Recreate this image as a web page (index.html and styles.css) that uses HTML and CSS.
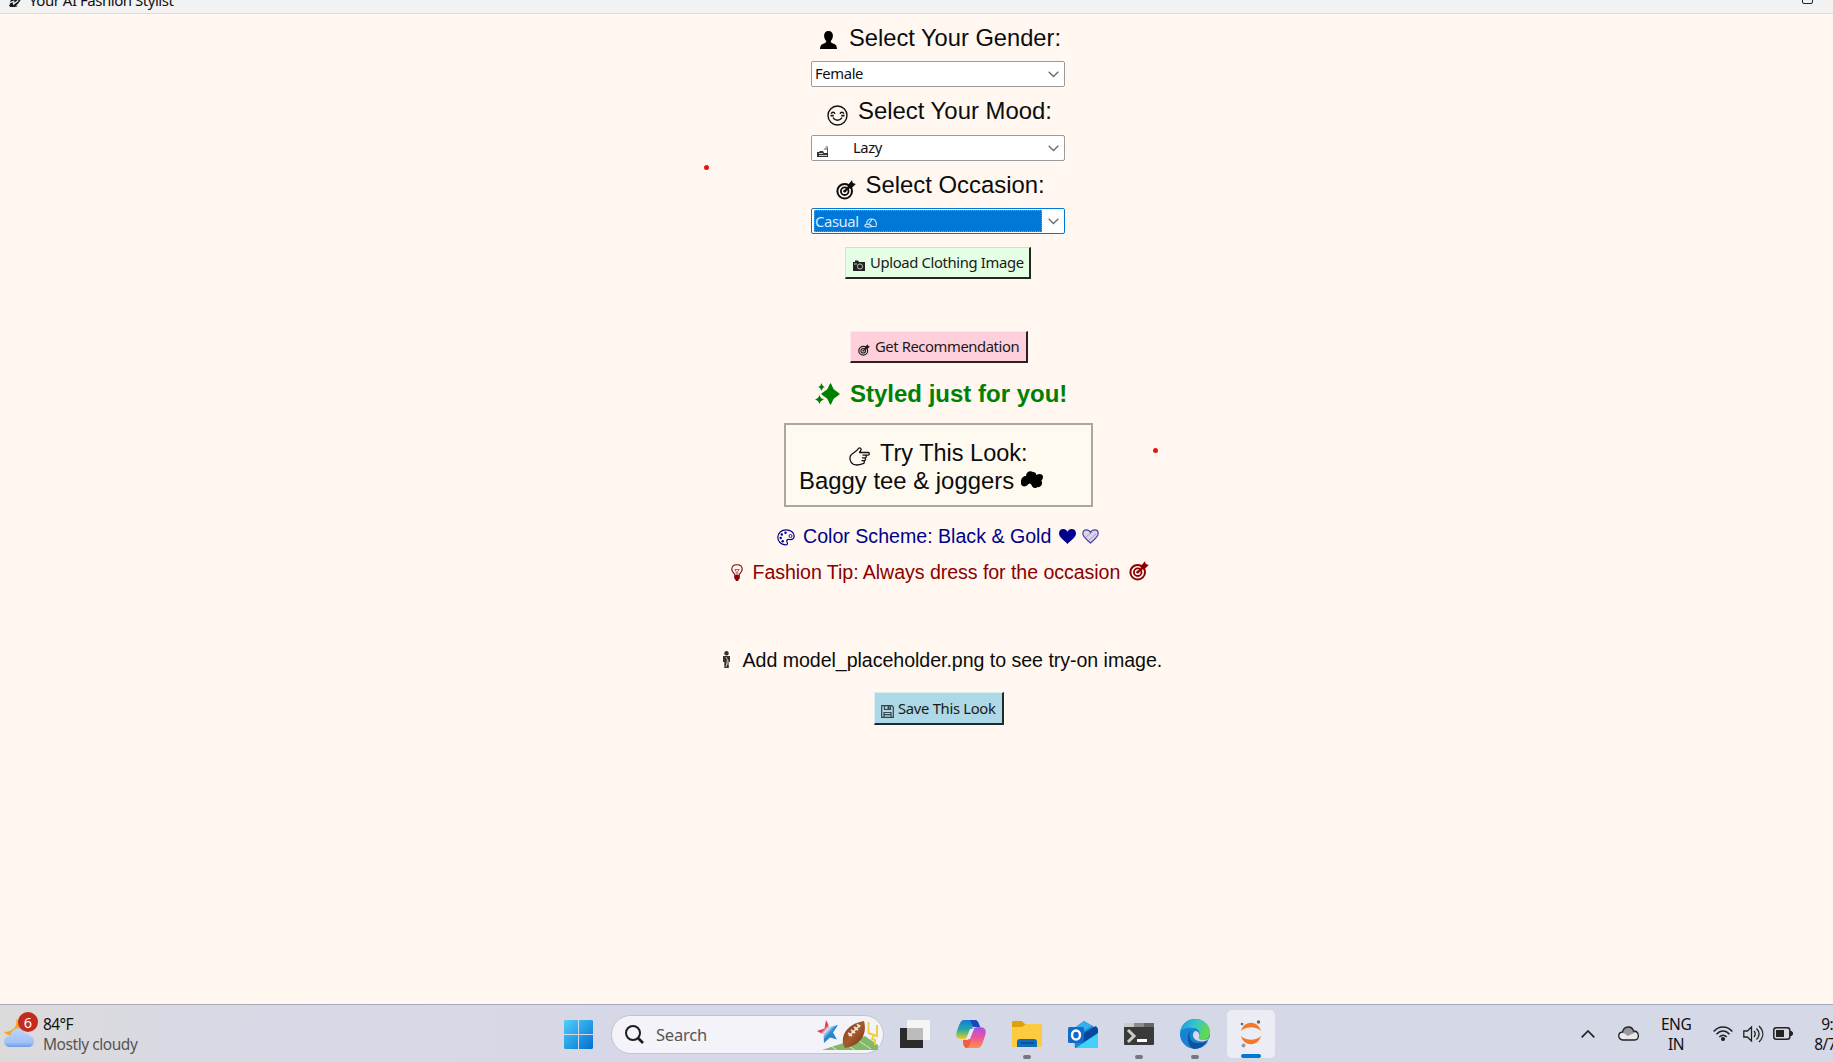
FILE: index.html
```html
<!DOCTYPE html>
<html lang="en">
<head>
<meta charset="utf-8">
<title>Your AI Fashion Stylist</title>
<link rel="stylesheet" href="styles.css">
</head>
<body>
<svg class="defs" aria-hidden="true">
  <symbol id="target" viewBox="0 0 20 20">
    <g fill="none" stroke="currentColor"><circle cx="8.7" cy="11.2" r="7.3" stroke-width="2"/><circle cx="8.7" cy="11.2" r="3.8" stroke-width="1.8"/><path d="M8.7 11.2 15 5.2" stroke-width="2"/></g>
    <circle cx="8.7" cy="11.2" r="1.4" fill="currentColor"/><path d="M11.500 5.500 16 .3l.8 2.800 3 1-4.700 4.500-3.200-.2z" fill="currentColor"/>
  </symbol>
</svg>
<div class="window">
  <header class="titlebar">
    <svg class="feather" viewBox="0 0 16 20"><path d="M2 15c0-3 2-5 5-6 3 0 5-2 9-5-1 6-3 9-6 12-1 1-2 2-3 3H2z" fill="#111"/><path d="M1 15l5-2v3l5-4M8 11l3-3" fill="none" stroke="#ddd" stroke-width="1.500"/><path d="M1 17c1 2 5 2 9 1" fill="none" stroke="#222"/></svg>
    <span>Your AI Fashion Stylist</span>
    <i class="maximize"></i>
  </header>
  <main class="stylist">
    <h2 class="line heading gender">
      <svg width="17" height="19" viewBox="0 0 17 19"><path d="M8.5 0c3 0 4.6 2 4.4 5-.2 2.600-1.300 4.200-2.200 5 .2 1.500 1 2 3 2.700 2.300.8 3.100 2 3.300 5.300H0c.2-3.300 1-4.500 3.300-5.300 2-.7 2.800-1.200 3-2.700-.9-.8-2-2.400-2.200-5C3.900 2 5.500 0 8.500 0z"/></svg>
      <span>Select Your Gender:</span>
    </h2>
    <div class="combo"><span>Female</span><svg class="chevron" viewBox="0 0 11 7"><path d="M.7.7l4.800 4.800L10.300.7"/></svg></div>
    <h2 class="line heading mood">
      <svg width="21" height="21" viewBox="0 0 21 21" fill="none" stroke="#111" stroke-width="1.400"><circle cx="10.500" cy="10.500" r="9.500"/><path d="M4.200 8.700c.8-2 3-2 3.800 0M13 8.700c.8-2 3-2 3.800 0M6 12.500c2 3.600 7 3.600 9 0"/><path d="M3.500 10.700h3.200M14.300 10.700h3.200" stroke-width="1.800"/></svg>
      <span>Select Your Mood:</span>
    </h2>
    <div class="combo"><svg class="sofa" viewBox="0 0 12 12"><path d="M0 7h2l1-1h3l1 2h4v4H0z" fill="#333"/><path d="M7 4h3M8.500 2h2.500M10.500 3v5" stroke="#556" fill="none"/><path d="M2 8.500h4M2 10.500h8" stroke="#ccc" fill="none"/></svg><span>Lazy</span><svg class="chevron" viewBox="0 0 11 7"><path d="M.7.7l4.800 4.800L10.300.7"/></svg></div>
    <h2 class="line heading occasion">
      <svg width="20" height="20"><use href="#target"/></svg>
      <span>Select Occasion:</span>
    </h2>
    <div class="combo focused"><div class="selection"><span>Casual</span><svg width="13" height="10" viewBox="0 0 13 10" fill="none" stroke="#cfe6fa" stroke-width="1.200"><path d="M2.500 5.500C3 2.500 5 1 7.500 1c3 0 5 2.500 5 6.500M.6 7.500C2 5.500 5.500 5.500 8 8.500H12.500M.6 7.500C1 9.500 5 9.500 8 8.500M5 5.500l3-4"/></svg></div><svg class="chevron" viewBox="0 0 11 7"><path d="M.7.7l4.800 4.800L10.300.7"/></svg></div>
    <button class="btn upload"><svg width="12" height="11" viewBox="0 0 12 11"><path d="M0 2h2V.5h3L6 2h6v9H0z" fill="#222"/><circle cx="7" cy="6.500" r="2.600" fill="#222" stroke="#b8c9b5"/><path d="M1 4h3" stroke="#b8c9b5"/></svg><span>Upload Clothing Image</span></button>
    <button class="btn recommend"><svg width="12" height="12"><use href="#target"/></svg><span>Get Recommendation</span></button>
    <h2 class="line styled">
      <svg width="25" height="22" viewBox="0 0 25 22" fill="currentColor"><path d="M15.500 0c1.500 2 2 4.500 3.500 6.500 1.500 1.500 4 2.500 6 4.500-2 2-4.500 3-6 4.500-1.500 2-2 4.500-3.500 6.500-1.500-2-2-4.500-3.500-6.500C10.500 14 8 13 6 11c2-2 4.500-3 6-4.500 1.500-2 2-4.500 3.500-6.500zM6.500 0c.8 2.500 1.500 3.200 3.500 4-2 .8-2.700 1.500-3.500 4C5.700 5.500 5 4.800 3 4c2-.8 2.700-1.500 3.500-4zM4.500 12c1 2.700 2 3.700 4.500 4.500-2.500.8-3.500 1.800-4.500 4.500-1-2.700-2-3.700-4.500-4.500C2.500 15.700 3.500 14.700 4.500 12z"/></svg>
      <span>Styled just for you!</span>
    </h2>
    <section class="look">
      <div class="line try">
        <svg width="21" height="19" viewBox="0 0 21 19" fill="none" stroke="#111" stroke-width="1.300"><path d="M10 5.500h9.200c1.500 0 1.500 2.600 0 2.600H13.500M14.500 8.200h1.800c1.300 0 1.300 2.700 0 2.700H13M15.500 11c1.300 0 1.300 2.700 0 2.700H12.500M14.500 13.800c1.300 0 1 2.700-.4 2.900C9 18.500 4 18.500 2 15 .5 12.500.5 9 2.500 7.500 5 5.500 8 4 9.500 1.500 10.300.3 12.500 1 12 2.800 11.700 4 11.200 4.800 10 5.500"/></svg>
        <span>Try This Look:</span>
      </div>
      <div class="line outfit">
        <span>Baggy tee &amp; joggers</span>
        <svg width="22" height="17" viewBox="0 0 22 17"><path d="M5 5C5 1 9-1 12 1c2 0 3 1 3.500 3 3-2 6.500-1 6.500 2 0 2-1.500 3-1.500 4 2 3-1 7-4 6-2 2-5 1-6-2-1-2-2-2-4 0-3 3-7.500 1-6.500-3C-.5 8 2 5 5 5z"/></svg>
      </div>
    </section>
    <p class="line scheme">
      <svg width="18" height="17" viewBox="0 0 18 17" fill="none" stroke="currentColor" stroke-width="1.200"><path d="M9 .8c5 0 8.200 3 8.200 6.200 0 3-2 4-5 3.500-2.500-.3-3 1-2 3 .7 1.500 0 2.600-2 2.400C4 15.500.8 12.500.8 8.500.8 4 4.500.8 9 .8z"/><g fill="currentColor" stroke="none"><circle cx="8.500" cy="3.700" r="1.200"/><circle cx="4.800" cy="5.500" r="1.200"/><circle cx="3.700" cy="9" r="1.200"/><circle cx="5.700" cy="12.300" r="1.200"/></g><circle cx="13.500" cy="7" r="1.500" stroke-width=".9"/></svg>
      <span>Color Scheme: Black &amp; Gold</span>
      <svg width="17" height="15" viewBox="0 0 17 15" fill="currentColor"><path d="M8.500 15C5 11 0 8.500 0 4.300 0 1.500 2 0 4.300 0c2 0 3.500 1.200 4.200 2.700C9.200 1.200 10.700 0 12.700 0 15 0 17 1.500 17 4.300 17 8.500 12 11 8.500 15z"/></svg>
      <svg class="light-heart" width="17" height="15" viewBox="0 0 17 15" fill="#dcd3e6" stroke="#4a42a8" stroke-width="1.200"><path d="M8.500 14C5 10.500.8 8.200.8 4.500.8 2 2.500.8 4.300.8c2 0 3.500 1.200 4.200 2.700C9.200 2 10.700.8 12.700.8c2 0 3.500 1.500 3.500 3.700C16.200 8.200 12 10.500 8.500 14z"/><path d="M4 8l6-5M7 11l7-6" stroke="#9d93c5" stroke-width=".8"/></svg>
    </p>
    <p class="line tip">
      <svg width="12" height="17" viewBox="0 0 12 17" fill="none" stroke="currentColor" stroke-width="1.100"><path d="M4 11.500C3.500 9 .8 8.500.8 5.300.8 2.500 3 .7 6 .7s5.200 1.800 5.200 4.600c0 3.200-2.700 3.700-3.200 6.200z"/><path d="M5.200 11V7.500L3.800 5.500h4.400L6.800 7.500V11" stroke-width=".6"/><path d="M3.800 12h4.400v2L6.500 16.500h-1L3.800 14z" fill="currentColor"/></svg>
      <span>Fashion Tip: Always dress for the occasion</span>
      <svg width="20" height="20"><use href="#target"/></svg>
    </p>
    <p class="line placeholder">
      <svg width="9" height="18" viewBox="0 0 9 18"><circle cx="4.500" cy="2.200" r="2.200" fill="#333"/><path d="M1 5h7v6H6.800v6H2.300v-6H1z" fill="#333"/><path d="M4 6l1.500 3L4 16M6 9v5" fill="none" stroke="#c9b9ae"/></svg>
      <span>Add model_placeholder.png to see try-on image.</span>
    </p>
    <button class="btn save"><svg width="13" height="13" viewBox="0 0 13 13" fill="none" stroke="#34454c" stroke-width="1.200"><path d="M.7.7h10.300l1.300 1.500v10.100H.7z"/><path d="M3.500 1v3.500h6V1M3 12V7.500h7V12M3 9.700h7"/><path d="M7.500 1v3" stroke-width="2"/></svg><span>Save This Look</span></button>
  </main>
  <i class="dot dot-left"></i><i class="dot dot-right"></i>
</div>
<footer class="taskbar">
  <div class="weather">
    <svg width="32" height="38" viewBox="0 0 32 38"><defs><linearGradient id="cl" x2="0" y2="1"><stop stop-color="#b9d5fb"/><stop offset=".75" stop-color="#a3c3f6"/><stop offset="1" stop-color="#6f9bea"/></linearGradient></defs><path d="M12 5c2 7-3 13-12 13 3 4 10 5 14 2 5-3 5-11-2-15z" fill="#f5a623"/><path d="M6 33c-8 0-8-11 0-11C8 13 18 11 21 20c2-1 4 0 4 2 7 0 7 11-1 11z" fill="url(#cl)"/></svg>
    <b class="badge">6</b>
    <div class="forecast"><span>84°F</span><span class="muted">Mostly cloudy</span></div>
  </div>
  <nav class="apps">
    <svg class="start" width="29" height="29" viewBox="0 0 29 29"><defs><linearGradient id="win" x2="1" y2="1"><stop stop-color="#4fd0fc"/><stop offset="1" stop-color="#0070cf"/></linearGradient></defs><path d="M1 0h13v14H0V1zM15 0h13l1 1v13H15zM0 15h14v14H1l-1-1zM15 15h14v13l-1 1H15z" fill="url(#win)"/></svg>
    <div class="search">
      <svg width="19" height="19" viewBox="0 0 19 19" fill="none" stroke="#1c1c1c" stroke-width="2"><circle cx="8" cy="8" r="7"/><path d="M13 13l5 5" stroke-width="2.600"/></svg>
      <span>Search</span>
      <svg class="football" width="62" height="32" viewBox="0 0 62 32"><defs><linearGradient id="star" x1="0" y1="0" x2="1" y2="1"><stop offset=".35" stop-color="#e8394b"/><stop offset=".45" stop-color="#d9e3ef"/><stop offset=".6" stop-color="#2586d2"/></linearGradient><linearGradient id="ball" x2="1" y2="1"><stop stop-color="#7b3c1d"/><stop offset=".5" stop-color="#a65a2d"/><stop offset="1" stop-color="#6d2f15"/></linearGradient></defs><path d="M5 31l43-14 13 9v5z" fill="#82b968"/><path d="M15 28l5 3M27 24l11 7M39 20l15 10" stroke="#d7e8cb"/><path d="M9 1l3.500 7L21 6l-5 7.500 4 7-7-2-6 5.500-.5-8.500L0 12l7.500-2.500z" fill="url(#star)"/><path d="M51.500 3v11l8.500 3V6M57 16l-2 4 3 1v5" fill="none" stroke="#efcf3f" stroke-width="2"/><path d="M28 29c-6-9 0-24 19-27 3 11-1 24-19 27z" fill="url(#ball)"/><path d="M32 17L43 6M31 14l4 3M34 11l4 3M37 8l4 3M40 5l3 3" stroke="#f3e8e0" stroke-width="1.600"/></svg>
    </div>
    <a class="app"><svg viewBox="0 0 32 32"><path d="M1 10h23v20H1z" fill="#2b2b2b"/><path d="M8 2h23v20H8z" fill="#f5f5f5"/><path d="M8 10h16v12H8z" fill="#bcbcbc"/></svg></a>
    <a class="app"><svg viewBox="0 0 32 32"><defs><linearGradient id="cp1" x2="0" y2="1"><stop stop-color="#1679dc"/><stop offset=".5" stop-color="#22aaa5"/><stop offset="1" stop-color="#f0cc22"/></linearGradient><linearGradient id="cp2" x2="0" y2="1"><stop stop-color="#a451ee"/><stop offset=".5" stop-color="#ee5399"/><stop offset="1" stop-color="#fb9348"/></linearGradient></defs><path d="M9 2h11c3 0 4 4 5 7h-7l-5 9c-1 3-4 3-6 3-5 0-7-2-5-8C4 8 5 2 9 2z" fill="url(#cp1)"/><path d="M15 2h5c3 0 4 4 5 7h-5c-3 0-4-5-5-7z" fill="#1746bd"/><path d="M23 30H12c-3 0-4-4-4-8h5l4-9c1-3 4-4 7-4 6 0 8 3 6 9-2 5-3 12-7 12z" fill="url(#cp2)"/><path d="M8 22h8c-1 4-2 8-5 8-2-1-3-4-3-8z" fill="#f05b42"/><path d="M15 11h4l-4 10h-4z" fill="#e7e7f2"/></svg></a>
    <a class="app running"><svg viewBox="0 0 32 32"><path d="M1 7V4c0-1 1-1 2-1h8l3 3h16l1 1v6H1z" fill="#dfa109"/><path d="M1 9h10l4-3h15l1 1v22H1z" fill="#fdcb3f"/><path d="M6 29v-5c0-2 1-3 3-3h14c2 0 3 1 3 3v5z" fill="#0f6cbd"/><path d="M10 25h13" stroke="#074c8b" stroke-width="1.500"/></svg></a>
    <a class="app"><svg viewBox="0 0 32 32"><path d="M6 11L17 3l14 8v17c0 1-1 2-2 2H8z" fill="#1788d8"/><path d="M17 3l8 5-15 9-3-6z" fill="#35aee9"/><path d="M29 8l2 3v5L15 25V16z" fill="#06489b"/><path d="M31 15v14l-2 1H9z" fill="#43d0f7"/><rect x="1" y="9" width="16" height="16" rx="1.500" fill="#0f6cc9"/><ellipse cx="9" cy="17" rx="4" ry="4.600" fill="none" stroke="#fff" stroke-width="2.500"/></svg></a>
    <a class="app running"><svg viewBox="0 0 32 32"><path d="M1 5h30v21c0 1-1 1-2 1H3c-1 0-2 0-2-1z" fill="#3a3a3a"/><path d="M1 5h10v4H1z" fill="#ccc"/><path d="M11 5h10v4H11z" fill="#8b8b8b"/><path d="M21 5h10v4H21z" fill="#666"/><path d="M5 12l6 6-6 6" fill="none" stroke="#ccc" stroke-width="3"/><path d="M14 22.500h10" stroke="#fff" stroke-width="3"/></svg></a>
    <a class="app running"><svg viewBox="0 0 32 32"><defs><linearGradient id="eg" x2="1" y2=".4"><stop stop-color="#1793d8"/><stop offset=".5" stop-color="#35c4d0"/><stop offset="1" stop-color="#63d94e"/></linearGradient></defs><circle cx="16" cy="16" r="15" fill="#1683d5"/><path d="M1 14C3 5 9 1 16 1c9 0 15 6 15 13 0 5-3 8-7 8-3 0-5-1-4-3 2-4 0-9-6-9C8 9 3 11 1 14z" fill="url(#eg)"/><path d="M12 12c-4 7 0 14 8 13 3 0 6-1 8-2-3 5-8 8-13 8C8 29 7 17 12 12z" fill="#10519d"/><path d="M16 13c-4 3-2 9 4 10 4 1 7 0 10-2-1 2-2 3-3 3l5-1v-5c-2 3-5 4-8 4-3 0-5-1-4-3 1-2 0-6-4-6z" fill="#d7dae8"/></svg></a>
    <a class="app active"><svg viewBox="0 0 32 32"><path d="M6 13c3-11 17-11 20 0-5-5-15-5-20 0zM6 18c3 11 17 11 20 0-5 5-15 5-20 0z" fill="#f37726"/><g fill="#666"><circle cx="7" cy="6" r="1.300"/><circle cx="23.500" cy="4" r="1.700"/><circle cx="8.500" cy="27.500" r="1.900" fill="#999"/></g></svg></a>
  </nav>
  <div class="tray">
    <svg width="14" height="8" viewBox="0 0 14 8" fill="none" stroke="#222" stroke-width="1.700"><path d="M.7 7.300L7 1l6.300 6.300"/></svg>
    <svg width="21" height="15" viewBox="0 0 21 15"><path d="M4.500 14C-.5 13-.5 6.500 4.500 6 6-.5 14-.5 15.500 5c6 0 6.500 8.500 1 9z" fill="#e9e9e9"/><path d="M4 7C6-.5 14-.5 15.500 5l3 1-9 4C8 8 6 7 4 7z" fill="#999"/><path d="M4.500 14C-.5 13-.5 6.500 4.500 6 6-.5 14-.5 15.500 5c6 0 6.500 8.500 1 9z" fill="none" stroke="#222" stroke-width="1.300"/></svg>
    <div class="stack lang"><span>ENG</span><span>IN</span></div>
    <svg width="20" height="15" viewBox="0 0 20 15" fill="none" stroke="#222" stroke-width="1.500"><path d="M.7 5.500c5-6 13.600-6 18.600 0M3.500 8.300c4-4.300 9-4.300 13 0M6.300 11c2.500-2.500 4.900-2.500 7.400 0"/><circle cx="10" cy="13" r="1.300" fill="#222"/></svg>
    <svg width="21" height="18" viewBox="0 0 21 18" fill="none" stroke="#222" stroke-width="1.300"><path d="M.8 6h3.500L8.500 2v14l-4.200-4H.8zM11 6c1.700 2 1.700 4 0 6M13.500 3.500c3.300 3.500 3.300 7.500 0 11M16 1c5 5 5 11 0 16"/></svg>
    <svg width="20" height="13" viewBox="0 0 20 13"><rect x=".8" y=".8" width="16" height="11.400" rx="2.500" fill="none" stroke="#222" stroke-width="1.500"/><path d="M3 3h8v7H3zM17 4h1.500L20 5.500v2L18.500 9H17z" fill="#222"/></svg>
    <div class="stack clock"><span>9:</span><span>8/7</span></div>
  </div>
</footer>
</body>
</html>
```
FILE: styles.css
```css
* { box-sizing: border-box; }
body { margin: 0; width: 1833px; height: 1062px; overflow: hidden; display: flex; flex-direction: column; font-family: "Noto Sans", sans-serif; color: #111; }
svg { flex: none; display: block; }
.defs { display: none; }
.window { position: relative; width: 1876px; height: 1004px; flex: none; background: #fff7f0; }
.titlebar { height: 14px; display: flex; align-items: flex-end; background: #f2f2f2; border-bottom: 1px solid #dfdddb; padding-left: 8px; overflow: hidden; font-size: 15px; line-height: 20px; letter-spacing: -.47px; }
.titlebar span { margin: 0 0 3px 6px; }
.feather { width: 15px; height: 19px; margin-bottom: 5px; }
.maximize { width: 11px; height: 10px; margin: 0 63px 9px auto; border: 1.500px solid #222; border-radius: 2px; }
.stylist { display: flex; flex-direction: column; align-items: center; }
.line { display: flex; flex: none; margin: 0; font-family: "Liberation Sans", Arial, sans-serif; font-weight: 400; white-space: nowrap; color: #0c0c0c; }
.heading { height: 47px; padding-top: 10px; font-size: 23.800px; line-height: 28px; }
.heading svg { margin-top: 7px; }
.gender { width: 244px; padding-left: 4px; gap: 12px; font-size: 23.700px; }
.mood { width: 222px; height: 48px; gap: 10px; font-size: 23.900px; }
.mood svg { margin-top: 8px; }
.occasion { width: 205px; height: 47px; gap: 10px; font-size: 23.900px; }
.occasion svg { margin-top: 9px; }
.combo { display: flex; align-items: center; width: 254px; height: 26px; flex: none; padding: 0 5px 0 3px; background: #fff; border: 1px solid #9a9a9a; border-radius: 2px; font-size: 14.800px; letter-spacing: -.38px; line-height: 22px; }
.combo span { margin-bottom: 3px; }
.chevron { width: 11px; height: 7px; margin: 1px 0 0 auto; fill: none; stroke: #6b6b6b; stroke-width: 1.300; }
.sofa { width: 12px; height: 12px; margin: 5px 24px 0 2px; }
.focused { border-color: #0078d7; padding-left: 2px; }
.selection { display: flex; align-items: center; gap: 5px; width: 228px; height: 22px; background: #0078d7; border: 1px dotted #d18340; color: #d8ecff; }
.selection span { margin-bottom: 1px; }
.selection svg { margin-top: 4px; }
.btn { display: flex; flex: none; align-items: center; padding: 0; border: solid; border-width: 1px 2px 2px 1px; font: 14.800px/20px "Noto Sans", sans-serif; color: #1a1a1a; white-space: nowrap; }
.btn svg { margin-top: 6px; }
.btn span { margin-bottom: 1px; }
.upload { width: 186px; height: 32px; margin-top: 13px; padding-left: 7px; gap: 5px; background: #e4ffe3; border-color: #cfe2cd #20281f #20281f #cfe2cd; letter-spacing: -.35px; }
.recommend { width: 178px; height: 32px; margin: 52px 0 0 2px; padding-left: 7px; gap: 5px; background: #ffd0dc; border-color: #ffe5eb #2b2023 #2b2023 #ffe5eb; letter-spacing: -.42px; }
.save { width: 130px; height: 33px; margin: 20px 0 0 2px; padding-left: 6px; gap: 4px; background: #add8e6; border-color: #d9edf4 #20292c #20292c #d9edf4; letter-spacing: -.3px; }
.styled { width: 256px; padding-left: 5px; height: 60px; padding-top: 17px; gap: 10px; font-weight: 700; font-size: 24px; line-height: 27px; color: #008000; }
.styled svg { margin-top: 3px; }
.look { width: 309px; height: 84px; margin-left: 1px; margin-bottom: 1px; padding: 15px 14px 13px 13px; background: #fffaf0; border: 2px solid #aaa6a0; }
.try { padding-left: 50px; gap: 10px; font-size: 23.500px; line-height: 27px; }
.try svg { margin-top: 7px; }
.outfit { gap: 7px; font-size: 23.900px; line-height: 27px; }
.outfit svg { margin-top: 4px; }
.scheme, .tip, .placeholder { font-size: 19.600px; line-height: 24px; }
.scheme { width: 322px; height: 36px; margin-top: 16px; color: #00008b; }
.scheme svg { margin-top: 5px; }
.scheme span { flex: none; width: 264px; padding-left: 8px; }
.scheme .light-heart { margin-left: 6px; }
.tip { width: 418px; height: 24px; margin-left: 3px; gap: 10px; letter-spacing: -.06px; color: #8b0000; }
.tip svg { margin-top: 4px; }
.tip svg:last-child { margin-top: 1px; margin-left: -2px; }
.tip span { width: 368px; }
.placeholder { width: 440px; height: 24px; margin: 64px 0 0 7px; gap: 12px; letter-spacing: -.04px; }
.placeholder svg { margin-top: 3px; }
.dot { position: absolute; width: 5px; height: 5px; border-radius: 50%; background: #e51616; }
.dot-left { left: 703.500px; top: 164.500px; }
.dot-right { left: 1153px; top: 448px; }

.taskbar { display: flex; height: 58px; flex: none; border-top: 1px solid #aaa9b7; background: linear-gradient(90deg, #dcdadb 0, #d7d9e5 230px, #d6d8e7 600px, #d5d8e7); }
.weather { position: relative; width: 564px; display: flex; }
.weather > svg { margin: 9px 0 0 4px; }
.badge { position: absolute; left: 18px; top: 7px; width: 20px; height: 20px; border-radius: 50%; background: #c42b1c; color: #fff; font-weight: 400; font-size: 14.500px; line-height: 20px; text-align: center; }
.forecast { display: flex; flex-direction: column; padding: 9px 0 0 7px; font-size: 15.500px; line-height: 20px; letter-spacing: -.6px; }
.muted { color: #555; letter-spacing: -.45px; }
.apps { display: flex; }
.start { margin-top: 15px; }
.search { display: flex; align-items: center; width: 273px; height: 39px; margin: 10px 6.500px 0 18px; padding: 0 4px 0 13px; border: 1px solid #c3c3cf; border-radius: 20px; background: #f3f3f9; color: #555; font-size: 16.500px; letter-spacing: -.2px; }
.search span { margin-left: 12px; }
.football { margin-left: auto; }
.app { position: relative; width: 48px; height: 48px; margin: 5px 8.100px 0 0; display: flex; align-items: center; justify-content: center; border-radius: 5px; }
.app svg { width: 32px; height: 32px; }
.running::after, .active::after { content: ""; position: absolute; left: 20px; bottom: -1px; width: 8px; height: 4px; border-radius: 2px; background: #77777f; }
.active { background: #ebecf4; }
.active::after { left: 14px; bottom: 0; width: 20px; background: #0078d4; }
.tray { display: flex; align-items: center; margin-left: auto; width: 252px; flex: none; }
.tray svg:nth-child(2) { margin-left: 23px; }
.stack { display: flex; flex-direction: column; font-size: 15.500px; line-height: 20px; letter-spacing: -.5px; text-align: center; }
.lang { width: 34px; margin: 0 22px 0 22px; padding-top: 1px; }
.tray svg:nth-child(5) { margin-left: 10px; }
.tray svg:nth-child(6) { margin-left: 9px; }
.clock { width: 40px; margin-left: 21px; text-align: left; white-space: nowrap; }
.clock span:first-child { padding-left: 7px; }
```
